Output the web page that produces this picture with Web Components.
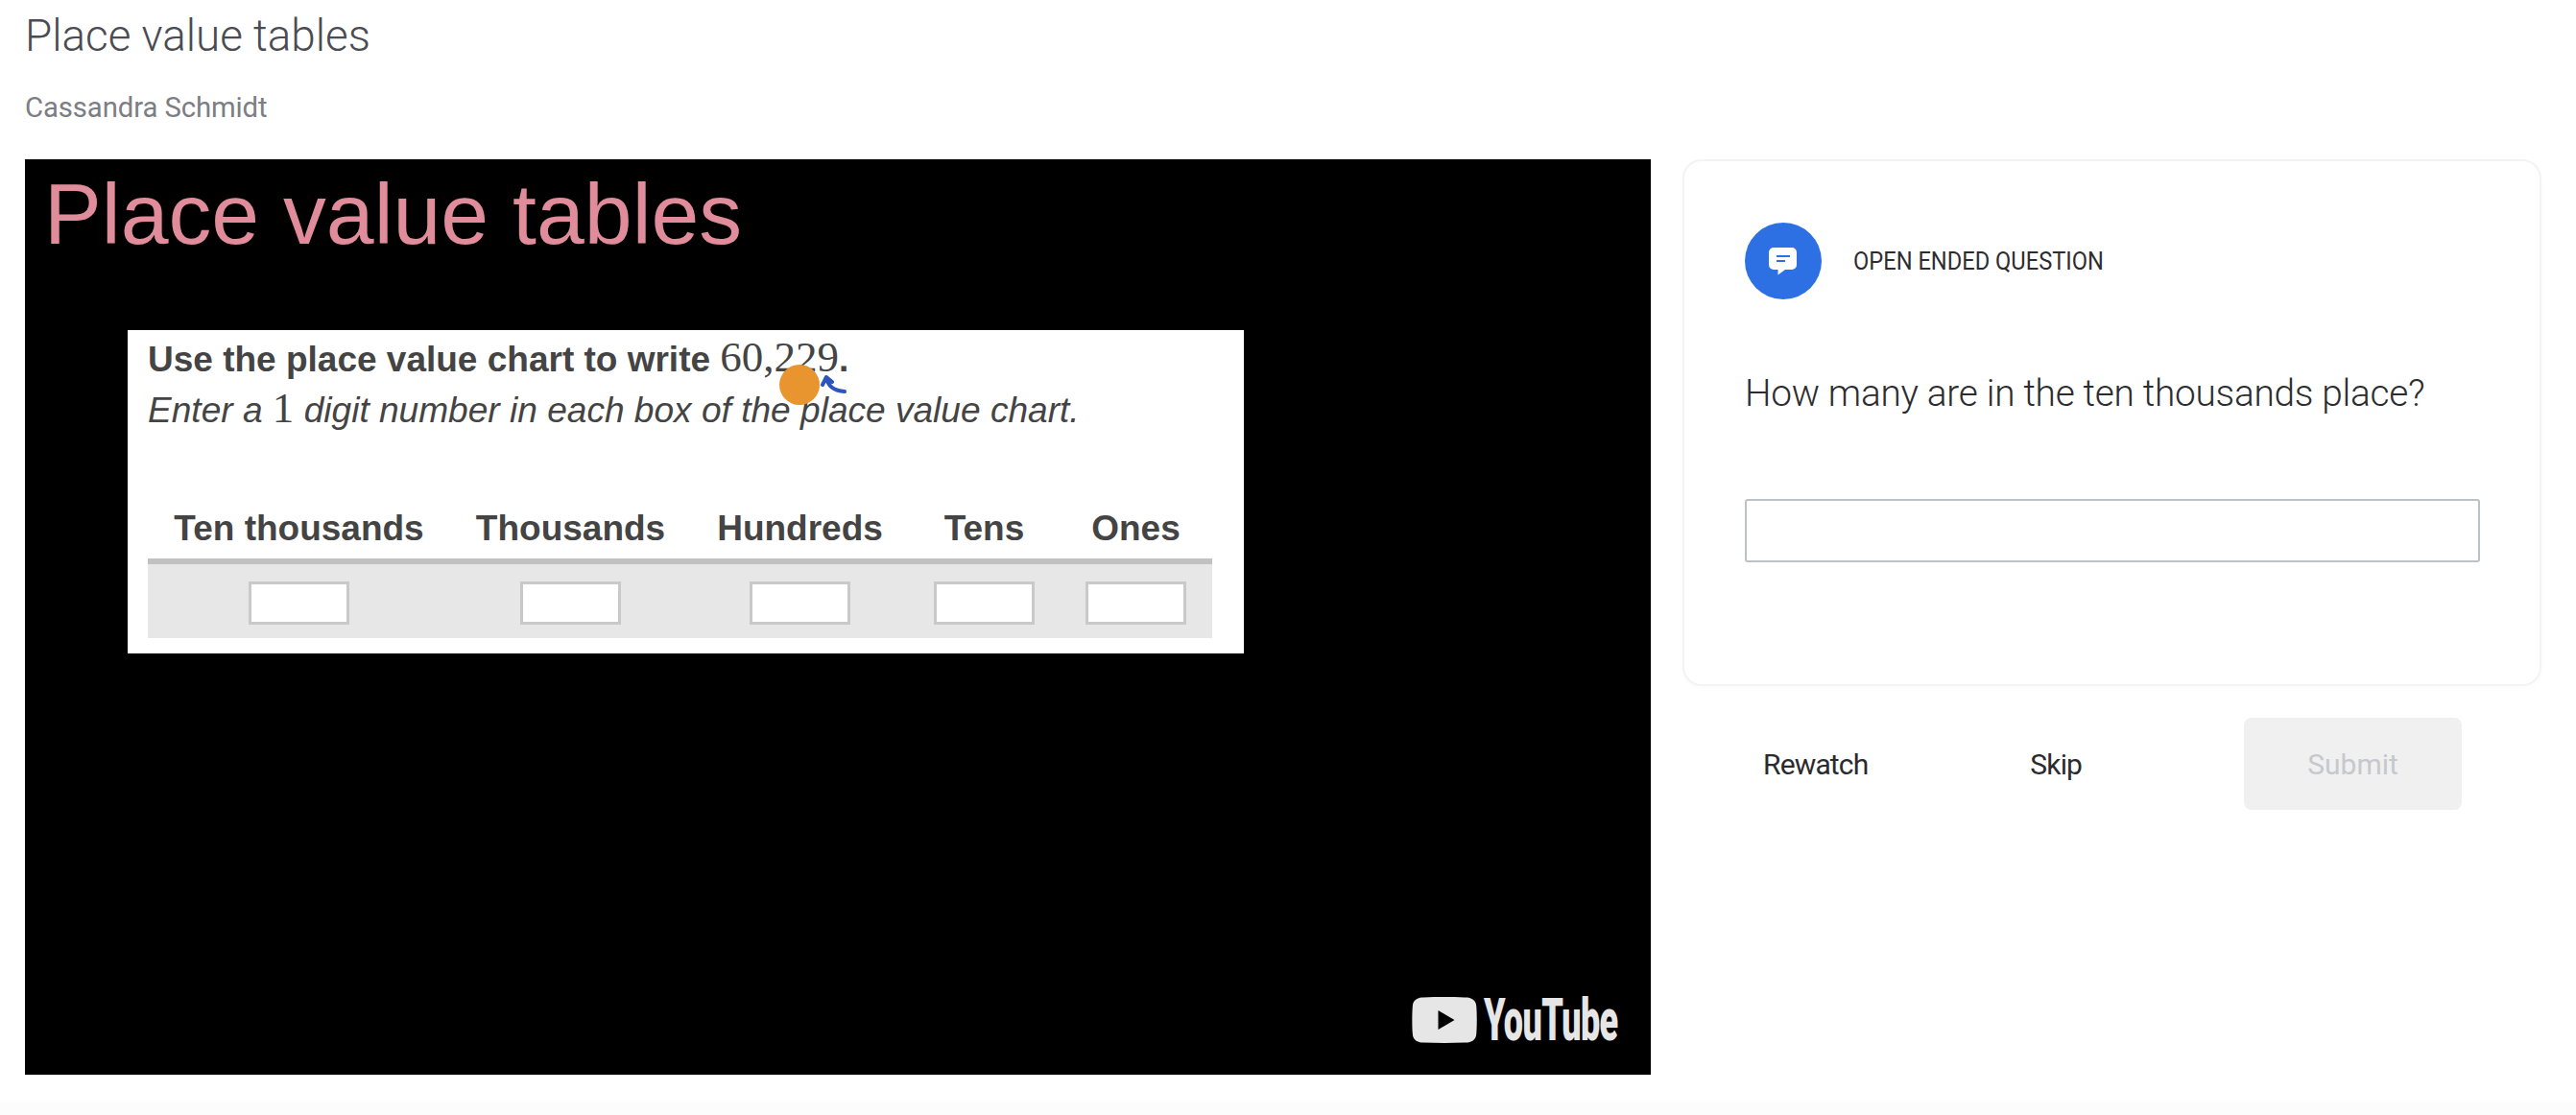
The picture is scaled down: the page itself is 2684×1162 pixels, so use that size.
<!DOCTYPE html>
<html lang="en"><head><meta charset="utf-8"><title>Place value tables</title>
<style>
html,body{margin:0;background:#fff;height:100%;overflow:hidden}
body{font-family:Roboto,"Liberation Sans",sans-serif}
</style></head><body>
<lesson-page>
  <lesson-header slot="header" title="Place value tables" author="Cassandra Schmidt"></lesson-header>
  <video-frame slot="video" heading="Place value tables">
    <place-value-chart></place-value-chart>
  </video-frame>
  <div slot="side">
    <question-card kind="OPEN ENDED QUESTION" question="How many are in the ten thousands place?"></question-card>
    <action-bar></action-bar>
  </div>
</lesson-page>
<script>
function def(name,html){
  customElements.define(name,class extends HTMLElement{
    connectedCallback(){
      if(this.shadowRoot)return;
      const r=this.attachShadow({mode:'open'});
      r.innerHTML=html.replace(/\{\{(\w+)\}\}/g,(m,k)=>this.getAttribute(k)||'');
    }
  });
}
def('lesson-page',`<style>
:host{display:block;height:1162px;box-sizing:border-box;position:relative;
  background:linear-gradient(#fff 0,#fff 1146px,#fcfcfc 1150px,#fcfcfc 100%)}
.wrap{padding:0 36px 0 26px}
.main{display:flex;align-items:flex-start;gap:33px}
.v{flex:0 0 1694px}
.s{flex:1 1 auto;min-width:0}
</style><div class="wrap"><slot name="header"></slot><div class="main"><div class="v"><slot name="video"></slot></div><div class="s"><slot name="side"></slot></div></div></div>`);
def('lesson-header',`<style>
:host{display:block;height:166px;box-sizing:border-box;padding-top:12px}
h1{margin:0;font:300 45.800px/52px Roboto,sans-serif;color:#4b4c52;letter-spacing:0}
p{margin:31px 0 0;font:400 29.300px/34px Roboto,sans-serif;color:#7c7e84;letter-spacing:-.1px}
</style><h1>{{title}}</h1><p>{{author}}</p>`);
def('video-frame',`<style>
:host{display:block;height:954px;background:#000;position:relative;box-sizing:border-box;padding:0 0 0 107px;overflow:hidden}
h2{margin:0 0 0 -87px;height:178px;font:400 89.600px/112px "Liberation Sans",Arial,sans-serif;color:#e08c9b;padding-top:1px;box-sizing:border-box}
.yt{position:absolute;left:1445px;top:872px}
</style><h2>{{heading}}</h2><slot></slot><youtube-mark class="yt"></youtube-mark>`);
def('youtube-mark',`<style>
:host{display:flex;align-items:center;gap:7px;height:50px;width:220px;color:#e6e6e6}
svg{display:block;flex:none}
span{display:block;font:900 62px/50px Roboto,"Liberation Sans",sans-serif;letter-spacing:-1px;transform:scaleX(.58);transform-origin:left center;white-space:nowrap}
</style><svg width="68" height="48" viewBox="0 0 68 48"><path fill="#e6e6e6" d="M12 0.5C6 .5 1 3 .8 10 .2 18 .2 30 .8 38 1 45 6 47.5 12 47.5c14 .6 30 .6 44 0 6 0 11-2.5 11.3-9.500.6-8 .6-20 0-28C67 3 62 .5 56 .5c-14-.6-30-.6-44 0z"/><path fill="#000" d="M27.500 14v20l17-10z"/></svg><span>YouTube</span>`);
def('place-value-chart',`<style>
:host{display:block;width:1163px;height:337px;background:#fff;box-sizing:border-box;padding:0 33px 16px 21px;position:relative;color:#444;font-family:"Liberation Sans",Arial,sans-serif}
.l1{font-weight:700;font-size:37px;line-height:46px;height:48px;padding-top:6px;white-space:nowrap}
.l2{font-style:italic;font-size:37.100px;line-height:54px;height:54px;padding-top:2px;white-space:nowrap}
.m{font-family:"Liberation Serif",serif;font-weight:400;font-style:normal;font-size:45px;line-height:1}
.g{display:grid;grid-template-columns:315px 251px 227px 157px 159px;margin-top:74px}
.h{font-weight:700;font-size:37px;line-height:46px;text-align:center;height:54px;white-space:nowrap;border-bottom:6px solid #c1c1c1;box-sizing:content-box;padding-bottom:0}
.c{background:#e7e7e7;height:77px;display:flex;justify-content:center;padding-top:18px;box-sizing:border-box}
input{all:unset;display:block;width:105px;height:45px;box-sizing:border-box;border:3px solid #c9c9c9;background:#fff}
.dot{position:absolute;left:679px;top:36px;width:42px;height:42px;border-radius:50%;background:#e8952f}
.cur{position:absolute;left:722px;top:46px}
</style>
<div class="l1">Use the place value chart to write <span class="m">60,229</span>.</div>
<div class="l2">Enter a <span class="m">1</span> digit number in each box of the place value chart.</div>
<div class="g">
<div class="h">Ten thousands</div><div class="h">Thousands</div><div class="h">Hundreds</div><div class="h">Tens</div><div class="h">Ones</div>
<div class="c"><input aria-label="Ten thousands"></div><div class="c"><input aria-label="Thousands"></div><div class="c"><input aria-label="Hundreds"></div><div class="c"><input aria-label="Tens"></div><div class="c"><input aria-label="Ones"></div>
</div>
<div class="dot"></div>
<svg class="cur" width="28" height="22" viewBox="0 0 28 22" fill="none" stroke="#2c55c0" stroke-width="4" stroke-linecap="round" stroke-linejoin="round"><path d="M2 11 6 3l6 5M6 3c1 7 5 14 19 15"/></svg>`);
def('question-card',`<style>
:host{display:block;box-sizing:border-box;height:549px;background:#fff;border:2px solid #f3f3f4;border-radius:20px;padding:64px 63px;box-shadow:0 2px 6px rgba(0,0,0,.02)}
.top{display:flex;align-items:center;gap:33px;height:80px}
.ic{width:80px;height:80px;flex:none;display:block}
.k{font:400 26px/30px Roboto,sans-serif;color:#2d2d30;white-space:nowrap;transform:scaleX(.91);transform-origin:left center}
.q{margin:74px 0 0;font:300 38.800px/48px Roboto,sans-serif;color:#2d2d30;letter-spacing:-.28px;white-space:nowrap}
input{all:unset;display:block;box-sizing:border-box;width:766px;height:66px;margin-top:86px;border:2px solid #bcc1c6;border-radius:3px;background:#fff}
</style><div class="top"><svg class="ic" viewBox="0 0 80 80"><circle cx="40" cy="40" r="40" fill="#2d70e4"/><path fill="#fff" d="M30 26h19a5 5 0 0 1 5 5v13a5 5 0 0 1-5 5h-7l-7.500 5.500V49H30a5 5 0 0 1-5-5V31a5 5 0 0 1 5-5z"/><path stroke="#2d70e4" stroke-width="2" d="M33 35h14M33 40h9"/></svg><div class="k">{{kind}}</div></div><p class="q">{{question}}</p><input aria-label="Answer">`);
def('action-bar',`<style>
:host{display:flex;align-items:center;height:96px;margin-top:33px;position:relative;font:400 30px/36px Roboto,sans-serif;color:#2b2b2e}
span{padding-top:2px}
.r{margin-left:84px;letter-spacing:-.85px}.sk{margin-left:169px;letter-spacing:-.85px}
.b{margin-left:auto;margin-right:83px;width:227px;height:96px;box-sizing:border-box;border-radius:8px;background:#f0f0f1;color:#c6c8cc;display:flex;align-items:center;justify-content:center}
</style><span class="r">Rewatch</span><span class="sk">Skip</span><span class="b">Submit</span>`);
</script>
</body></html>
